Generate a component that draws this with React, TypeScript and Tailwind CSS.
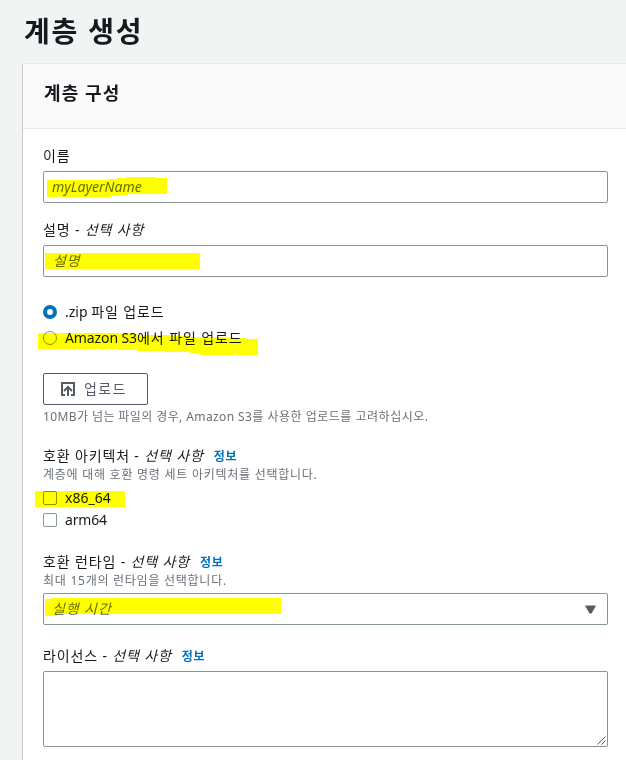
import type { ReactNode } from 'react';

function Info() {
  return <a href="#" className="ml-[10px] text-[12px] font-bold tracking-[0.8px] text-[#0073bb]">정보</a>;
}

function Label({ text, optional, info }: { text: string; optional?: boolean; info?: boolean }) {
  return (
    <div className="flex h-5 items-baseline whitespace-pre pt-px text-[14px] leading-5 tracking-[0.85px]">
      <span>{text}{optional && ' - '}</span>
      {optional && <em>선택 사항</em>}
      {info && <Info />}
    </div>
  );
}

function Hint({ children }: { children: ReactNode }) {
  return (
    <p className="h-4 whitespace-nowrap pt-px text-[12px] leading-4 tracking-[0.74px] text-[#687078]">{children}</p>
  );
}

function Radio({ checked, children }: { checked?: boolean; children: ReactNode }) {
  return (
    <div className="flex h-5 items-center gap-2 whitespace-nowrap leading-5">
      <span
        className={
          checked
            ? 'size-[14px] rounded-full border-[4px] border-[#0073bb] bg-white'
            : 'size-[14px] rounded-full border border-[#879596] bg-white'
        }
      />
      <span>{children}</span>
    </div>
  );
}

function Checkbox({ children }: { children: ReactNode }) {
  return (
    <div className="flex h-5 items-center gap-2 leading-5">
      <span className="size-[14px] rounded-[2px] border border-[#879596] bg-white" />
      <span>{children}</span>
    </div>
  );
}

// yellow marker strokes drawn over the form
function Marker() {
  return (
    <svg
      className="pointer-events-none absolute left-0 top-0 mix-blend-multiply"
      width="626"
      height="760"
      fill="#ffff00"
      shapeRendering="crispEdges"
    >
      <path d="M47 181V180H108V179H117V178H126V177H156V178H167V194H128V195H120V196H111V197H59V196H57V197H47Z" />
      <path d="M45 253H200V269H45Z" />
      <path d="M38 333H119V334H137V335H172V336H190V337H228V338H246V339H258V355H236V354H234V355H200V353H190V352H165V351H137V350H118V349H38Z" />
      <path d="M35 491H125V507H35Z" />
      <path d="M45 599H51V598H281V614H57V616H45Z" />
    </svg>
  );
}

export default function App() {
  return (
    <div className="relative isolate h-[760px] w-[626px] overflow-hidden bg-[#f2f3f3] pl-[23px] font-['Noto_Sans','Noto_Sans_CJK_KR',sans-serif] text-[14px] text-[#16191f]">
      <h1 className="h-[64px] whitespace-nowrap pl-px pt-[11px] text-[28px] font-bold leading-10 tracking-[1.8px]">계층 생성</h1>
      <section className="h-[700px] bg-white shadow-[-1px_0_0_#c6cccc,0_-1px_0_#e5e9e9]">
        <header className="h-[65px] border-b border-[#e4e8e8] bg-[#fafafa] px-[21px] pt-[17px]">
          <h2 className="whitespace-nowrap text-[18px] font-bold leading-6 tracking-[1.1px]">계층 구성</h2>
        </header>
        <div className="w-[585px] pl-5 pt-4">
          <Label text="이름" />
          <div className="mt-[6px] h-8 rounded-[2px] border border-[#879596] px-2 italic leading-[30px] text-[#687078]">
            myLayerName
          </div>
          <div className="mt-4">
            <Label text="설명" optional />
          </div>
          <div className="mt-[6px] h-8 rounded-[2px] border border-[#879596] px-[9px] italic leading-[30px] tracking-[0.9px] text-[#687078]">
            설명
          </div>

          <div className="mt-[25px] flex flex-col gap-[6px]">
            <Radio checked>
              .zip <span className="tracking-[0.9px]">파일 업로드</span>
            </Radio>
            <Radio>
              <span className="tracking-[-0.1px]">Amazon S3</span>
              <span className="tracking-[0.9px]">에서 파일 업로드</span>
            </Radio>
          </div>
          <button className="mt-[25px] flex h-8 w-[105px] items-center rounded-[2px] border border-[#545b64] pl-[17px] text-[#545b64]">
            <svg width="14" height="14" viewBox="0 0 14 14" fill="none" stroke="currentColor" strokeWidth="2">
              <path d="M4 13H1V1H13V13H10" />
              <path d="M7 14V5M3 9L7 5L11 9" />
            </svg>
            <span className="mb-[2px] ml-[9px] tracking-[1.4px]">업로드</span>
          </button>
          <div className="mt-[3px]">
            <Hint>
              <span className="tracking-[0.4px]">10MB가 넘는 파일의 경우, Amazon S3</span>
              <span className="tracking-[0.5px]">를 사용한 업로드를 고려하십시오.</span>
            </Hint>
          </div>

          <div className="mt-[21px]">
            <Label text="호환 아키텍처" optional info />
            <div className="mt-px"><Hint>계층에 대해 호환 명령 세트 아키텍처를 선택합니다.</Hint></div>
          </div>
          <div className="mt-[6px] flex flex-col gap-[2px]">
            <Checkbox>x86_64</Checkbox>
            <Checkbox><span className="tracking-[-0.2px]">arm64</span></Checkbox>
          </div>

          <div className="mt-[21px]">
            <Label text="호환 런타임" optional info />
            <div className="mt-px"><Hint>최대 15개의 런타임을 선택합니다.</Hint></div>
          </div>
          <div className="mt-[5px] flex h-8 items-center justify-between rounded-[2px] border border-[#879596] pl-2 pr-[11px] text-[#687078]">
            <span className="mb-px italic tracking-[0.9px]">실행 시간</span>
            <svg width="11" height="9" viewBox="0 0 11 9" fill="#545b64">
              <path d="M0 0.5H11L6.5 8.5H4.5Z" />
            </svg>
          </div>

          <div className="mt-5">
            <Label text="라이선스" optional info />
          </div>
          <div className="mt-[6px] flex h-[76px] items-end justify-end rounded-[2px] border border-[#879596] p-px">
            <svg width="9" height="9" viewBox="0 0 9 9" stroke="#545b64" strokeWidth="1">
              <path d="M0.5 8.5L8.5 0.5M4.5 8.5L8.5 4.5" />
            </svg>
          </div>
        </div>
      </section>
      <Marker />
    </div>
  );
}
